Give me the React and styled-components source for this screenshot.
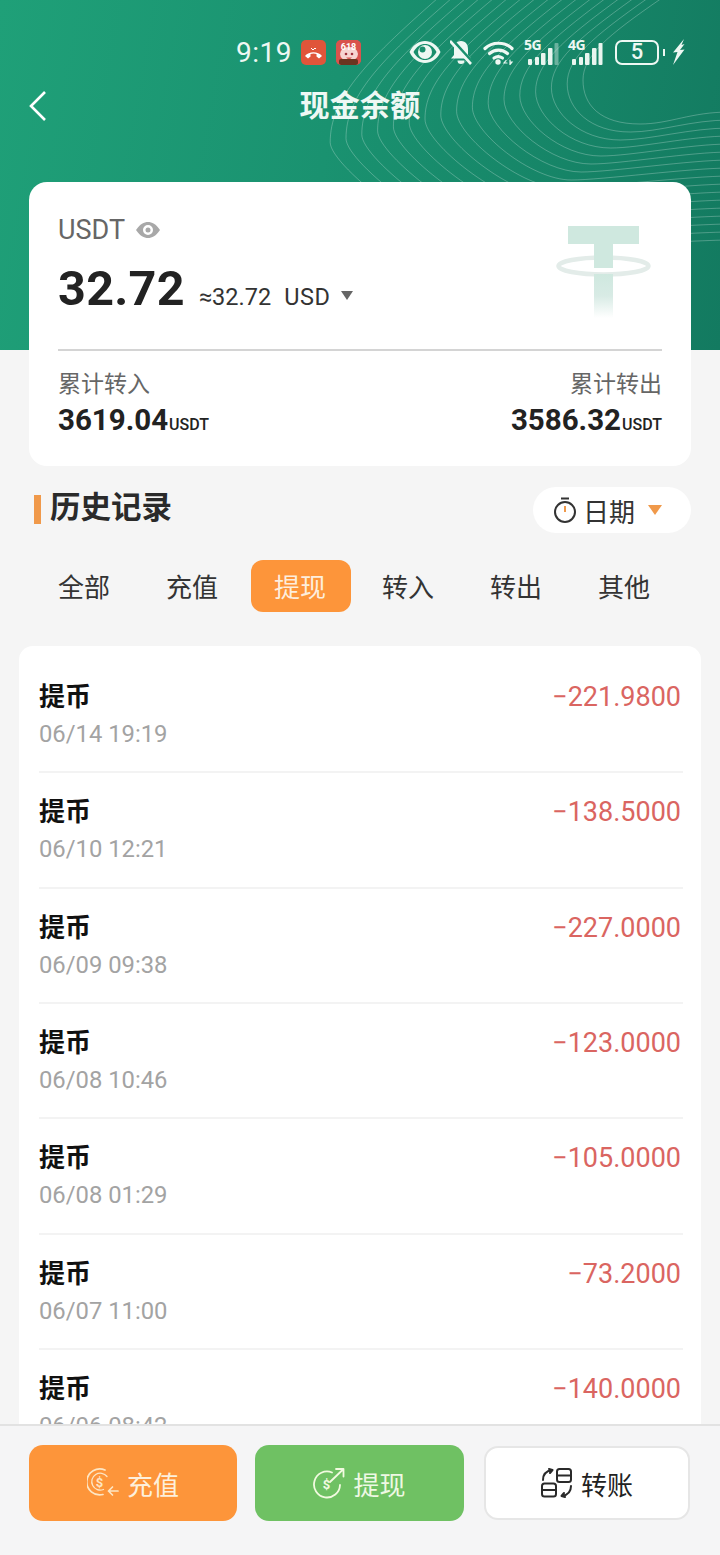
import styled, { createGlobalStyle } from "styled-components"

const records = [
  { date: "06/14 19:19", amount: "−221.9800" },
  { date: "06/10 12:21", amount: "−138.5000" },
  { date: "06/09 09:38", amount: "−227.0000" },
  { date: "06/08 10:46", amount: "−123.0000" },
  { date: "06/08 01:29", amount: "−105.0000" },
  { date: "06/07 11:00", amount: "−73.2000" },
  { date: "06/06 08:42", amount: "−140.0000" },
]

const tabs = ["全部", "充值", "提现", "转入", "转出", "其他"]

// nested curves in the header, innermost first
const waves = Array.from({ length: 17 }, (_, i) => {
  const tx = 662 - 14 * i
  const lx = 583 - 15.8 * i
  const ly = 80 + 3.9 * i
  const mx = lx + 57 + 6 * i
  const my = 124 + 8 * i
  const ry = 112 + 8 * i
  return `M${tx} -2 C${tx - (tx - lx) * 0.7} ${ly * 0.45}, ${lx} ${ly * 0.7}, ${lx} ${ly} C${lx} ${ly + 25}, ${mx - 40} ${my}, ${mx} ${my} C${mx + 30} ${my}, 690 ${ry}, 730 ${ry}`
})

const Waves = () => (
  <WaveSvg viewBox="0 0 720 350" fill="none" stroke="#fff" strokeOpacity="0.25" strokeWidth="1">
    {waves.map((d) => <path key={d} d={d} />)}
  </WaveSvg>
)

const Signal = ({ label, dim }) => (
  <SignalWrap>
    <SignalLabel>{label}</SignalLabel>
    <SignalBars width="31" height="24" viewBox="0 0 31 24" fill="#e8f5ef">
      <rect x="0" y="18" width="4" height="6" rx="1" />
      <rect x="7" y="16" width="4" height="8" rx="1" />
      <rect x="13" y="12" width="4.500" height="12" rx="1" />
      <rect x="20" y="7" width="4.500" height="17" rx="1" />
      <rect x="26.500" y="2" width="4" height="22" rx="1" opacity={dim ? 0.4 : 1} />
    </SignalBars>
  </SignalWrap>
)

const StatusIcons = () => (
  <>
    <svg width="32" height="24" viewBox="0 0 32 24">
      <path d="M0.500 12C4 4.500 10 1 16 1s12 3.500 15.500 11C28 19.500 22 23 16 23S4 19.500 0.500 12Z" fill="#eef8f3" />
      <path d="M4.500 12C7.500 6.500 11.500 4 16 4s8.500 2.500 11.500 8C24.500 17.500 20.500 20 16 20S7.500 17.500 4.500 12Z" fill="#1a8f6d" />
      <circle cx="16" cy="12" r="7" fill="#eef8f3" />
      <circle cx="13.500" cy="9.500" r="3" fill="#1a8f6d" />
    </svg>
    <svg width="24" height="26" viewBox="0 0 24 26">
      <path d="M11 2c-5 0-7 4-7 8v6l-3 3.500h20l-3-3.500v-6c0-4-2-8-7-8Z" fill="#eef8f3" />
      <path d="M7.500 21.500a3.500 3.500 0 0 0 7 0Z" fill="#eef8f3" />
      <path d="M1.500 0 23 24" stroke="#1a8f6d" strokeWidth="3" />
      <path d="M0 2 21 25" stroke="#eef8f3" strokeWidth="2.600" />
    </svg>
    <svg width="32" height="25" viewBox="0 0 32 25" fill="none" stroke="#eef8f3" strokeWidth="3.200" strokeLinecap="round">
      <path d="M2 8.500C9 1.500 22 1.500 29 8.500" />
      <path d="M6.500 13.500c5-4.500 13-4.500 18 0" />
      <path d="M11 18c2.500-1.500 6-1.500 8.500 0" />
      <circle cx="15" cy="22" r="2.700" fill="#eef8f3" stroke="none" />
      <path d="M23 20.500l-2 2.500h3M27 20v4.500l2-2.500h-2" strokeWidth="1.200" />
    </svg>
    <Signal label="5G" dim />
    <Signal label="4G" />
    <Battery>5</Battery>
    <BatteryCap />
    <svg width="13" height="26" viewBox="0 0 13 26">
      <path d="M12 0 1 13.500l4.500-.5L1 26l11.500-15.500-4.500.5L12.500 5l-3 1Z" fill="#eef8f3" />
    </svg>
  </>
)

const SaleBadge = () => (
  <svg width="25" height="25" viewBox="0 0 25 25">
    <rect width="25" height="25" rx="5" fill="#d9534d" />
    <ellipse cx="13" cy="14" rx="9" ry="7" fill="#f6d5d2" />
    <rect x="3" y="19" width="19" height="6" rx="2" fill="#6b3520" />
    <circle cx="10" cy="14" r="1.300" fill="#a12f3a" />
    <circle cx="16" cy="14" r="1.300" fill="#a12f3a" />
    <path d="M10 17.500c2 2 4 2 6 0" fill="#d9534d" />
    <SaleText x="12.500" y="10" textAnchor="middle" fill="#fff">618</SaleText>
  </svg>
)

const TetherLogo = () => (
  <svg width="96" height="96" viewBox="0 0 96 96">
    <defs>
      <linearGradient id="stem" x1="0" y1="0" x2="0" y2="1">
        <stop offset="0" stopColor="#cfe8df" />
        <stop offset="0.5" stopColor="#d8ebe5" />
        <stop offset="1" stopColor="#ffffff" />
      </linearGradient>
    </defs>
    <ellipse cx="47.500" cy="40" rx="45" ry="8.500" fill="none" stroke="#e3ecE9" strokeWidth="4.500" />
    <rect x="12" y="0" width="71" height="18" fill="#cfe8df" />
    <rect x="38" y="18" width="19" height="24" fill="#cfe8df" />
    <rect x="38" y="48" width="19" height="44" fill="url(#stem)" />
  </svg>
)

const ChargeIcon = ({ color }) => (
  <svg width="32" height="32" viewBox="0 0 32 32" fill="none" stroke={color} strokeWidth="1.700" strokeLinecap="round" strokeLinejoin="round">
    <path d="M18 3A13 13 0 1 0 16 27.500" />
    <path d="M20 9.500A8.500 8.500 0 1 0 16.500 22.500" strokeWidth="1.300" />
    <path d="M31 24H21.500M25.500 20l-4 4 4 4" />
    <Dollar x="12.500" y="20" textAnchor="middle" fill={color} stroke="none">$</Dollar>
  </svg>
)

const WithdrawIcon = ({ color }) => (
  <svg width="32" height="32" viewBox="0 0 32 32" fill="none" stroke={color} strokeWidth="1.800" strokeLinecap="round" strokeLinejoin="round">
    <path d="M19 5.500A13 13 0 1 0 27 18" />
    <path d="M17 15 30 2.500M23 2h7.500v7.500" />
    <Dollar x="13.500" y="22" textAnchor="middle" fill={color} stroke="none">$</Dollar>
  </svg>
)

const TransferIcon = () => (
  <svg width="32" height="30" viewBox="0 0 32 30" fill="none" stroke="#2a2a2a" strokeWidth="2" strokeLinecap="round" strokeLinejoin="round">
    <rect x="16" y="1" width="14" height="13" rx="2.500" />
    <path d="M16 7.500h14" />
    <rect x="1" y="15.500" width="14" height="13" rx="2.500" />
    <path d="M1 22h14" />
    <path d="M2 12C2 7 5 3 11 2M8 1l3.500 1L9 5" />
    <path d="M30 18C30 23 27 27 21 28M24 29l-3.500-1L23 25" />
  </svg>
)

const App = () => {
  return (
    <Page>
      <GlobalStyle />
      <Header>
        <Waves />
        <StatusBar>
          <Clock>9:19</Clock>
          <AppBadge $bg="#e0553a">
            <svg width="19" height="16" viewBox="0 0 19 16">
              <path d="M1 12c4-5 13-5 17 0l-3 2.500-2.500-2V10c-2-.8-4-.8-6 0v2.500L4 14.500Z" fill="#fff" />
              <path d="M7 4l2 2 2-2 1 1" fill="none" stroke="#fff" strokeWidth="1" />
            </svg>
          </AppBadge>
          <AppBadge $bg="#d9534d"><SaleBadge /></AppBadge>
          <StatusRight>
            <StatusIcons />
          </StatusRight>
        </StatusBar>
        <NavBar>
          <BackIcon width="20" height="32" viewBox="0 0 20 32" fill="none" stroke="#fff" strokeWidth="2.600">
            <path d="M17 2 3 16l14 14" />
          </BackIcon>
          <NavTitle>现金余额</NavTitle>
        </NavBar>
      </Header>

      <BalanceCard>
        <CardTop>
          <div>
            <CoinRow>
              <CoinName>USDT</CoinName>
              <svg width="26" height="18" viewBox="0 0 26 18">
                <path fillRule="evenodd" d="M1 9C5 3 9 1 13 1s8 2 12 8c-4 6-8 8-12 8S5 15 1 9Zm12 5a5 5 0 1 0 0-10 5 5 0 0 0 0 10Z" fill="#a8a8a8" />
                <circle cx="13" cy="9" r="2.500" fill="#a8a8a8" />
              </svg>
            </CoinRow>
            <AmountRow>
              <Amount>32.72</Amount>
              <Approx>≈32.72</Approx>
              <Approx $wide>USD</Approx>
              <AmountCaret />
            </AmountRow>
          </div>
          <LogoWrap><TetherLogo /></LogoWrap>
        </CardTop>
        <CardDivider />
        <TotalsRow>
          <Total>
            <TotalLabel>累计转入</TotalLabel>
            <TotalValue>3619.04<small>USDT</small></TotalValue>
          </Total>
          <Total $right>
            <TotalLabel>累计转出</TotalLabel>
            <TotalValue>3586.32<small>USDT</small></TotalValue>
          </Total>
        </TotalsRow>
      </BalanceCard>

      <HistoryHead>
        <HistoryTitle>历史记录</HistoryTitle>
        <DatePill>
          <svg width="24" height="28" viewBox="0 0 24 28" fill="none" stroke="#333" strokeWidth="2">
            <circle cx="12" cy="16" r="10" />
            <path d="M8 2.500h8" />
            <path d="M12 10v6" stroke="#f0994a" />
          </svg>
          <span>日期</span>
          <Triangle $color="#f0994a" />
        </DatePill>
      </HistoryHead>

      <TabBar>
        {tabs.map((t) => (
          <Tab key={t} $active={t === "提现"}>{t}</Tab>
        ))}
      </TabBar>

      <ListCard>
        {records.map((r) => (
          <Row key={r.date}>
            <div>
              <RowTitle>提币</RowTitle>
              <RowDate>{r.date}</RowDate>
            </div>
            <RowAmount>{r.amount}</RowAmount>
          </Row>
        ))}
      </ListCard>

      <BottomBar>
        <ActionButton $bg="#fd953a" $color="#fdf0dc">
          <ChargeIcon color="#fde6c4" />
          充值
        </ActionButton>
        <ActionButton $bg="#6fc163" $color="#eef8e4">
          <WithdrawIcon color="#f2fae0" />
          提现
        </ActionButton>
        <ActionButton $bg="#fff" $color="#222" $outlined>
          <TransferIcon />
          转账
        </ActionButton>
      </BottomBar>
    </Page>
  )
}

const GlobalStyle = createGlobalStyle`
  html, body {
    margin: 0;
    padding: 0;
  }
  body {
    background: #f5f5f5;
    font-family: Roboto, "Noto Sans CJK SC", sans-serif;
  }
  * {
    box-sizing: border-box;
  }
`

const Page = styled.div`
  width: 720px;
  height: 1555px;
  overflow: hidden;
  display: flex;
  flex-direction: column;
  background: #f5f5f5;
`

const Header = styled.header`
  position: relative;
  flex: none;
  height: 350px;
  margin-bottom: -168px;
  padding-top: 32px;
  overflow: hidden;
  background: linear-gradient(100deg, #1fa078 0%, #1a9270 45%, #137a60 100%);
`

const WaveSvg = styled.svg`
  position: absolute;
  left: 0;
  top: 0;
  width: 720px;
  height: 350px;
`

const StatusBar = styled.div`
  position: relative;
  display: flex;
  align-items: center;
  height: 40px;
  padding-left: 236px;
  color: #eef8f3;
`

const Clock = styled.span`
  font-size: 28px;
  letter-spacing: 0.5px;
  width: 56px;
  margin-right: 9px;
  white-space: nowrap;
`

const AppBadge = styled.span`
  width: 25px;
  height: 25px;
  margin-right: 10px;
  border-radius: 5px;
  overflow: hidden;
  background: ${({ $bg }) => $bg};
  display: flex;
  align-items: center;
  justify-content: center;
`

const SaleText = styled.text`
  font-size: 9px;
  font-weight: 700;
`

const StatusRight = styled.div`
  display: flex;
  align-items: center;
  gap: 9px;
  margin-left: 38px;
`

const SignalWrap = styled.span`
  position: relative;
  display: block;
  width: 35px;
  height: 25px;
`

const SignalBars = styled.svg`
  position: absolute;
  right: 0;
  bottom: 0;
`

const SignalLabel = styled.span`
  position: absolute;
  left: 0;
  top: -2px;
  font-family: "Noto Sans", sans-serif;
  font-size: 14px;
  line-height: 14px;
  font-weight: 700;
  letter-spacing: -0.5px;
`

const Battery = styled.span`
  width: 44px;
  height: 25px;
  margin-left: 3px;
  border: 2px solid #eef8f3;
  border-radius: 7px;
  display: flex;
  align-items: center;
  justify-content: center;
  font-size: 22px;
  font-weight: 500;
  line-height: 1;
`

const BatteryCap = styled.span`
  width: 2px;
  height: 7px;
  margin: 0 -2px 0 -5px;
  background: #eef8f3;
`

const NavBar = styled.div`
  position: relative;
  display: flex;
  align-items: center;
  justify-content: center;
  height: 48px;
  margin-top: 10px;
`

const BackIcon = styled.svg`
  position: absolute;
  left: 28px;
  top: 8px;
`

const NavTitle = styled.h1`
  margin: 0;
  font-size: 30px;
  line-height: 1;
  font-weight: 700;
  letter-spacing: 0.3px;
  color: #eef8f4;
`

const BalanceCard = styled.section`
  position: relative;
  flex: none;
  width: 662px;
  height: 284px;
  margin: 0 auto;
  padding: 30px 29px 0;
  border-radius: 18px;
  background: #fff;
`

const CardTop = styled.div`
  display: flex;
  justify-content: space-between;
  height: 137px;
`

const CoinRow = styled.div`
  display: flex;
  align-items: center;
  gap: 10px;
  height: 36px;
`

const CoinName = styled.span`
  font-size: 27px;
  color: #666;
`

const AmountRow = styled.div`
  display: flex;
  align-items: baseline;
  margin-top: 12px;
  height: 60px;
`

const Amount = styled.span`
  font-size: 48.500px;
  font-weight: 700;
  color: #222;
  margin-right: 14px;
  letter-spacing: 0.3px;
`

const Approx = styled.span`
  font-size: 23.500px;
  color: #333;
  margin-right: ${({ $wide }) => ($wide ? "10px" : "13px")};
  letter-spacing: ${({ $wide }) => ($wide ? "0.6px" : "0")};
`

const Triangle = styled.span`
  width: 0;
  height: 0;
  margin-top: 2px;
  border-left: 7px solid transparent;
  border-right: 7px solid transparent;
  border-top: 10px solid ${({ $color }) => $color};
`

const AmountCaret = styled.span`
  width: 0;
  height: 0;
  align-self: center;
  margin-top: 10px;
  border-left: 6px solid transparent;
  border-right: 6px solid transparent;
  border-top: 9px solid #666;
`

const LogoWrap = styled.div`
  padding: 14px 10px 0 0;
  height: 110px;
`

const CardDivider = styled.div`
  height: 2px;
  background: #d4d4d4;
`

const TotalsRow = styled.div`
  display: flex;
  justify-content: space-between;
  padding-top: 20px;
`

const Total = styled.div`
  display: flex;
  flex-direction: column;
  align-items: ${({ $right }) => ($right ? "flex-end" : "flex-start")};
`

const TotalLabel = styled.span`
  font-size: 23px;
  line-height: 28px;
  color: #666;
`

const TotalValue = styled.span`
  margin-top: 3px;
  font-size: 29.500px;
  line-height: 36px;
  font-weight: 700;
  color: #222;

  small {
    font-size: 16px;
    font-weight: 500;
    margin-left: 1px;
  }
`

const HistoryHead = styled.div`
  flex: none;
  display: flex;
  justify-content: space-between;
  height: 46px;
  margin-top: 21px;
  padding: 0 29px 0 34px;
`

const HistoryTitle = styled.h2`
  display: flex;
  gap: 9px;
  margin: 0;
  font-size: 30.500px;
  line-height: 42px;
  font-weight: 700;
  color: #2a2a2a;

  &::before {
    content: "";
    width: 7px;
    height: 29px;
    margin-top: 8px;
    background: #f0994a;
  }
`

const DatePill = styled.div`
  display: flex;
  align-items: center;
  width: 158px;
  height: 46px;
  padding-left: 20px;
  border-radius: 23px;
  background: #fff;
  font-size: 26px;
  color: #333;

  span {
    margin: 0 7px 0 6px;
  }
`

const TabBar = styled.nav`
  flex: none;
  display: grid;
  grid-template-columns: repeat(6, 108px);
  justify-items: center;
  align-items: center;
  height: 52px;
  margin-top: 27px;
  padding: 0 31px;
`

const Tab = styled.span`
  display: flex;
  align-items: center;
  justify-content: center;
  width: 100px;
  height: 52px;
  padding: 0 2px 2px 0;
  border-radius: 12px;
  font-size: 26px;
  background: ${({ $active }) => ($active ? "#fd953a" : "transparent")};
  color: ${({ $active }) => ($active ? "#fdeedd" : "#333")};
`

const ListCard = styled.section`
  flex: 1;
  min-height: 0;
  overflow: hidden;
  width: 682px;
  margin: 34px auto 0;
  padding: 12px 18px 0 20px;
  border-radius: 14px 14px 0 0;
  background: #fff;
`

const Row = styled.div`
  display: flex;
  justify-content: space-between;
  height: 115.330px;
  padding-top: 22px;
  border-bottom: 2px solid #f3f3f3;
`

const RowTitle = styled.div`
  font-size: 26px;
  line-height: 34px;
  font-weight: 700;
  color: #111;
`

const RowDate = styled.div`
  margin-top: 3px;
  font-size: 23.800px;
  line-height: 34px;
  color: #a3a3a3;
`

const RowAmount = styled.div`
  padding-right: 2px;
  font-size: 27px;
  line-height: 34px;
  color: #da6561;
`

const BottomBar = styled.footer`
  flex: none;
  display: grid;
  grid-template-columns: 208px 209px 208px;
  gap: 18px;
  height: 131px;
  padding: 19px 29px 0;
  border-top: 2px solid #e2e2e2;
  background: #f5f5f6;
  align-items: start;
`

const ActionButton = styled.button`
  display: flex;
  align-items: center;
  justify-content: center;
  gap: 8px;
  height: ${({ $outlined }) => ($outlined ? "74px" : "76px")};
  margin: ${({ $outlined }) => ($outlined ? "1px 0 0 2px" : "0")};
  padding: 0;
  border: ${({ $outlined }) => ($outlined ? "2px solid #e6e6e6" : "none")};
  border-radius: 14px;
  background: ${({ $bg }) => $bg};
  color: ${({ $color }) => $color};
  font-family: inherit;
  font-size: 26px;
`

const Dollar = styled.text`
  font-size: 13px;
  font-weight: 700;
`

export default App
